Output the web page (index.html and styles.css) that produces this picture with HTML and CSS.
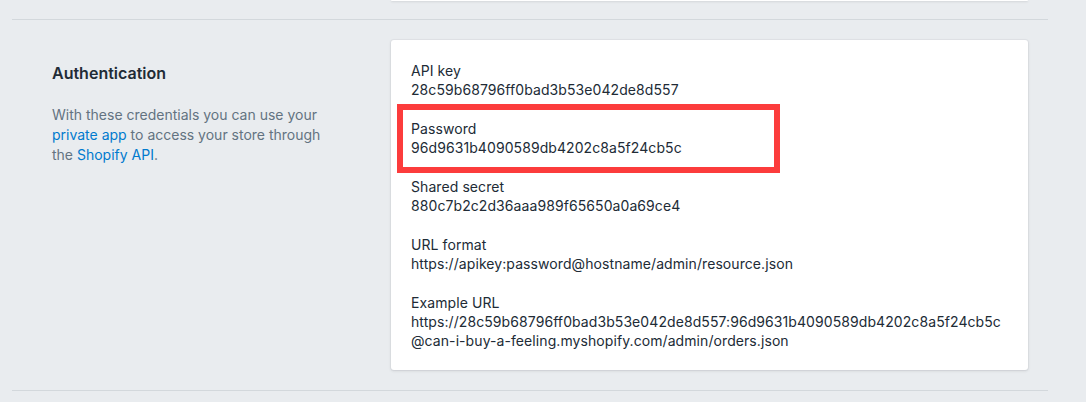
FILE: index.html
```html
<!DOCTYPE html>
<html lang="en">
<head>
<meta charset="utf-8">
<title>Authentication</title>
<link rel="stylesheet" href="styles.css">
</head>
<body>
<div class="page">
  <div class="prev-row">
    <div class="prev-card"></div>
  </div>
  <section class="layout-section">
    <div class="annotation">
      <h2 class="annotation-title">Authentication</h2>
      <p class="annotation-desc">With these credentials you can use your <a href="#">private app</a> to access your store through the <a href="#">Shopify API</a>.</p>
    </div>
    <div class="card">
      <div class="field">
        <div class="label">API key</div>
        <div class="value">28c59b68796ff0bad3b53e042de8d557</div>
      </div>
      <div class="field highlighted">
        <div class="label">Password</div>
        <div class="value">96d9631b4090589db4202c8a5f24cb5c</div>
        <div class="highlight-box"></div>
      </div>
      <div class="field">
        <div class="label">Shared secret</div>
        <div class="value">880c7b2c2d36aaa989f65650a0a69ce4</div>
      </div>
      <div class="field">
        <div class="label">URL format</div>
        <div class="value">https://apikey:password@hostname/admin/resource.json</div>
      </div>
      <div class="field">
        <div class="label">Example URL</div>
        <div class="value">https://28c59b68796ff0bad3b53e042de8d557:96d9631b4090589db4202c8a5f24cb5c<br>@can-i-buy-a-feeling.myshopify.com/admin/orders.json</div>
      </div>
    </div>
  </section>
  <div class="bottom-divider"></div>
</div>
</body>
</html>
```

FILE: styles.css
```css
* { box-sizing: border-box; }

html, body {
  margin: 0;
  padding: 0;
  background: #e9ecef;
}

body {
  font-family: "Inter", "Noto Sans", "Liberation Sans", sans-serif;
  font-size: 14px;
  line-height: 19px;
  color: #212b36;
}

.page {
  width: 1036px;
  margin-left: 12px;
}

.prev-row {
  height: 20px;
  display: flex;
  justify-content: flex-end;
  padding-right: 20px;
  border-bottom: 1px solid #d3d8dc;
}

.prev-card {
  width: 637px;
  height: 1px;
  background: #fff;
  box-shadow: 0 1px 2px rgba(63, 63, 68, 0.18);
  border-radius: 0 0 3px 3px;
}

.layout-section {
  display: flex;
  padding: 20px 20px 20px 40px;
}

.annotation {
  width: 339px;
  padding-top: 21px;
}

.annotation-title {
  margin: 0;
  font-size: 16px;
  line-height: 24px;
  font-weight: 600;
  color: #212b36;
}

.annotation-desc {
  margin: 20px 0 0;
  width: 282px;
  color: #637381;
  line-height: 20px;
}

.annotation-desc a {
  color: #007ace;
  text-decoration: none;
}

.card {
  width: 637px;
  background: #fff;
  border-radius: 3px;
  box-shadow: 0 0 0 1px rgba(63, 63, 68, 0.04), 0 1px 3px rgba(63, 63, 68, 0.15);
  padding: 21px 20px 20px;
  display: flex;
  flex-direction: column;
  gap: 20px;
  letter-spacing: 0.08px;
}

.field {
  position: relative;
}

.label, .value {
  color: #212b36;
}

.highlight-box {
  position: absolute;
  left: -14px;
  top: -15px;
  width: 383px;
  height: 69px;
  border: 6px solid #fc3c3c;
  pointer-events: none;
}

.bottom-divider {
  height: 1px;
  background: #d3d8dc;
}
```
